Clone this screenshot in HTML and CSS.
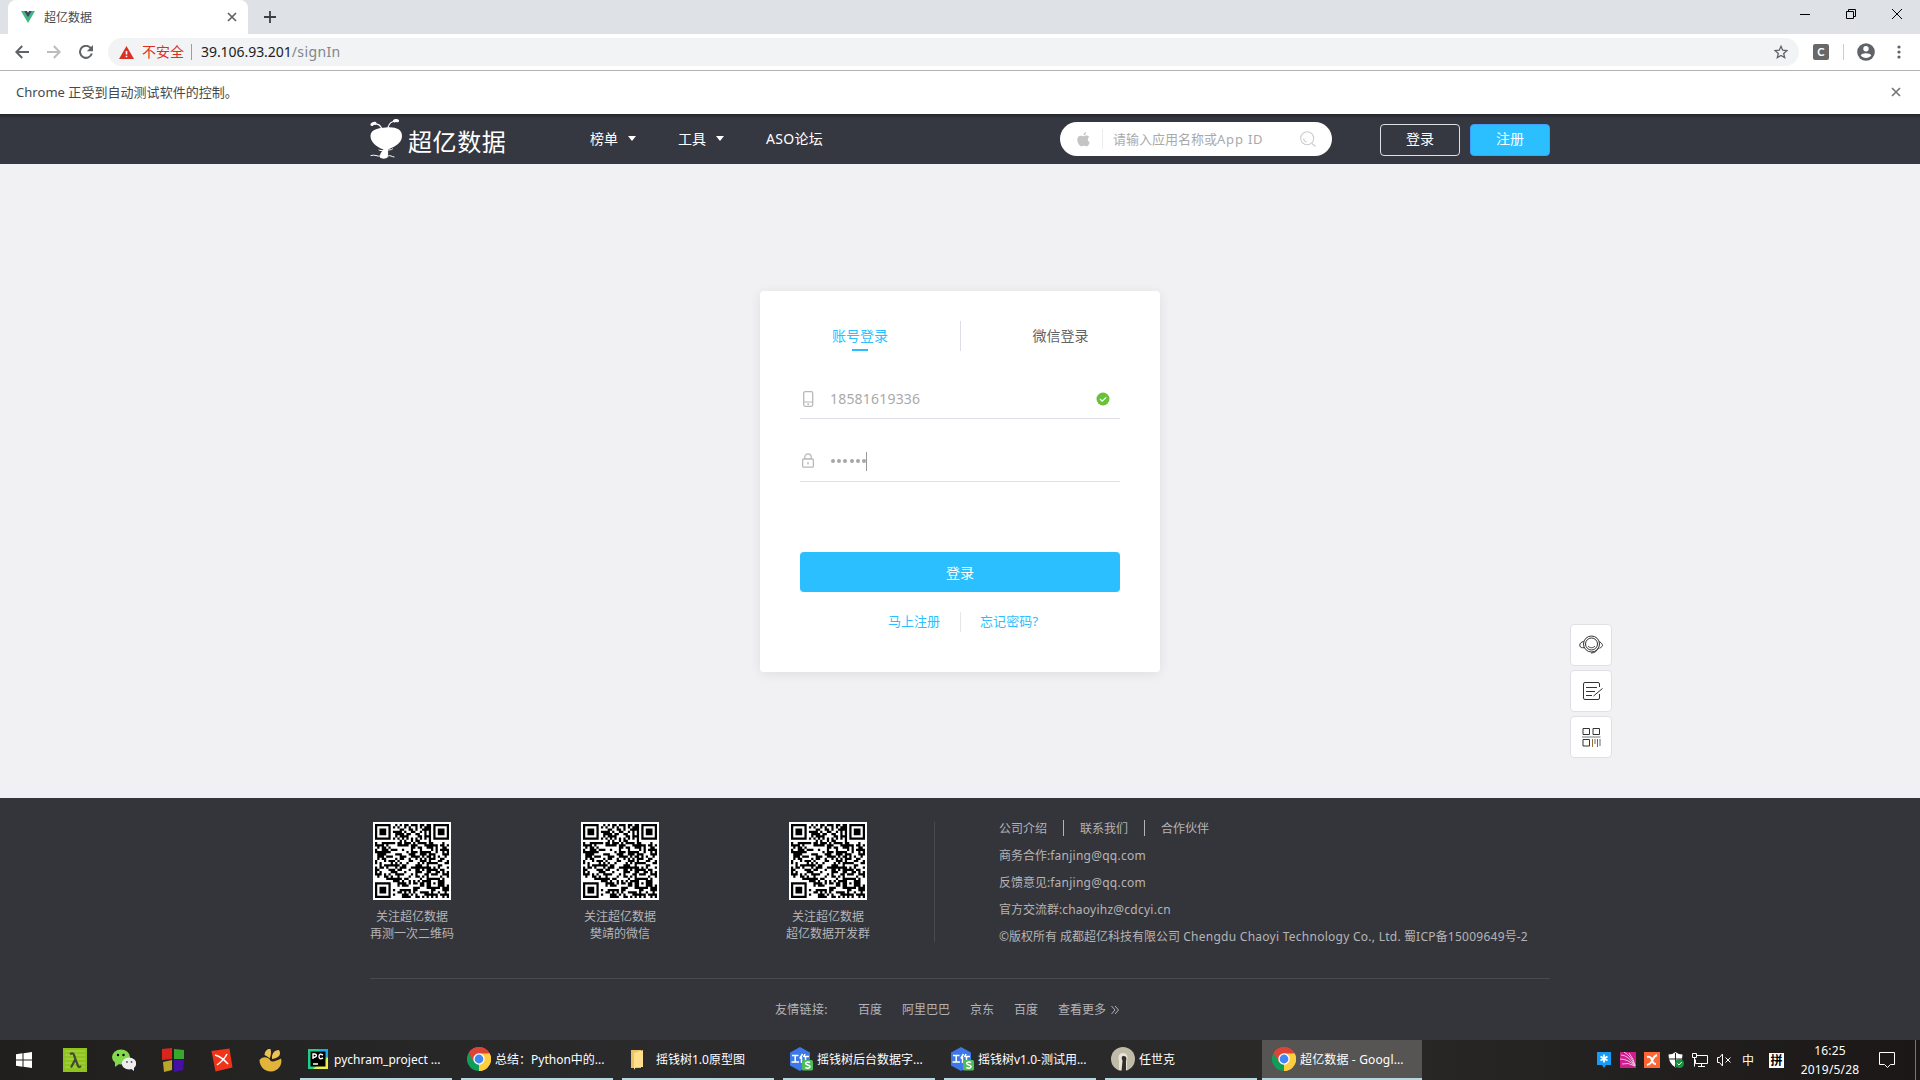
FILE: index.html
```html
<!DOCTYPE html>
<html lang="zh-CN">
<head>
<meta charset="utf-8">
<title>超亿数据</title>
<link rel="stylesheet" href="styles.css">
</head>
<body>
<svg class="defs" width="0" height="0">
  <symbol id="close" viewBox="0 0 10 10"><path d="M1 1l8 8M9 1L1 9" fill="none" stroke="currentColor" stroke-width="1.7"/></symbol>
  <symbol id="chrome" viewBox="0 0 24 24">
    <path d="M12 12L1.6 6A12 12 0 0 1 22.4 6z" fill="#db4437"/>
    <path d="M12 12L22.4 6A12 12 0 0 1 12 24z" fill="#ffcd40"/>
    <path d="M12 12V24A12 12 0 0 1 1.6 6z" fill="#0f9d58"/>
    <path d="M12 6.5H22.6L22.4 6A12 12 0 0 0 1.6 6L7 15z" fill="#db4437"/>
    <path d="M17 14.8L12 24A12 12 0 0 0 22.6 6.5H12z" fill="#ffcd40"/>
    <circle cx="12" cy="12" r="5.7" fill="#fff"/><circle cx="12" cy="12" r="4.4" fill="#4285f4"/>
  </symbol>
  <symbol id="wps" viewBox="0 0 24 24">
    <path d="M11 0l10 5.5v13L11 24 1 18.500v-13z" fill="#3c78e8"/>
    <path d="M3 8.500h6.500M6.200 8.500v6.500M2.500 15h7.500M13.500 7l-2.700 4.500M12.500 10v6M16 7l-1.500 3M15 9.500h5M16.500 9.500v5" stroke="#fff" stroke-width="1.5" fill="none"/>
    <rect x="13" y="13" width="11" height="10.500" rx="1.500" fill="#4fbb5b"/>
    <path d="M21 15.600c-1-.9-4.400-.9-4.400 1s4.500 1 4.500 3-3.600 1.900-4.700.8" stroke="#fff" stroke-width="1.500" fill="none"/>
  </symbol>
</svg>

<div class="tabstrip">
  <div class="tab">
    <svg class="favicon" viewBox="0 0 16 14"><path d="M1 1h3.500L8 7l3.500-6H15L8 13z" fill="#41b883"/><path d="M4.200 1H7l1 1.800L9 1h2.800L8 7.500z" fill="#35495e"/></svg>
    <span class="tab-title">超亿数据</span>
    <svg class="tab-close" viewBox="0 0 10 10"><use href="#close"/></svg>
  </div>
  <svg class="new-tab" viewBox="0 0 12 12"><path d="M6 0v12M0 6h12" stroke="#3c4043" stroke-width="1.800"/></svg>
  <div class="window-buttons">
    <svg width="10" height="10"><path d="M0 5.500h10" stroke="#000"/></svg>
    <svg width="10" height="10"><path d="M.5 2.500h7v7h-7zM2.500 2.500v-2h7v7h-2" fill="none" stroke="#000"/></svg>
    <svg width="10" height="10"><path d="M0 0l10 10M10 0L0 10" stroke="#000"/></svg>
  </div>
</div>

<div class="toolbar">
  <svg class="tool back" viewBox="0 0 14 14"><path d="M14 7H1.500M7.200 1L1.300 7l5.900 6" fill="none" stroke="#5f6368" stroke-width="2"/></svg>
  <svg class="tool forward" viewBox="0 0 14 14"><path d="M0 7h12.500M6.800 1l5.900 6-5.900 6" fill="none" stroke="#babcbe" stroke-width="2"/></svg>
  <svg class="tool reload" viewBox="0 0 14 14"><path d="M11.800 3.200A6 6 0 1 0 12.800 8.500" fill="none" stroke="#5f6368" stroke-width="2"/><path d="M14 0v6.200H7.800z" fill="#5f6368"/></svg>
  <div class="omnibox">
    <svg class="warning" viewBox="0 0 15 13"><path d="M7.500 0L15 13H0z" fill="#d93025"/><path d="M7.500 5v3.500M7.500 9.700v1.600" stroke="#fff" stroke-width="1.600"/></svg>
    <span class="unsafe">不安全</span>
    <span class="url">39.106.93.201<span class="path">/signIn</span></span>
    <svg class="star" viewBox="0 0 14 14"><path d="M7 1.300l1.700 3.900 4.200.4-3.200 2.800 1 4.200L7 10.400l-3.700 2.200 1-4.200L1.100 5.600l4.200-.4z" fill="none" stroke="#5f6368" stroke-width="1.300"/></svg>
  </div>
  <span class="extension">C</span>
  <span class="tool-sep"></span>
  <svg class="profile" viewBox="0 0 18 18"><circle cx="9" cy="9" r="8.800" fill="#5f6368"/><circle cx="9" cy="5.800" r="2.700" fill="#fff"/><path d="M3.700 12.200c1.300-2.700 9.300-2.700 10.600 0-2.500 3.700-8.100 3.700-10.600 0z" fill="#fff"/></svg>
  <svg class="kebab" viewBox="0 0 4 14"><circle cx="2" cy="2" r="1.600"/><circle cx="2" cy="7" r="1.600"/><circle cx="2" cy="12" r="1.600"/></svg>
</div>

<div class="infobar"><span>Chrome 正受到自动测试软件的控制。</span><svg viewBox="0 0 10 10"><use href="#close"/></svg></div>

<header class="site-header">
  <div class="container header-row">
    <div class="logo">
      <svg viewBox="0 0 32 40"><g fill="none" stroke="#fff" stroke-linecap="round"><path d="M11.500 9C10 5.500 7 4.500 3 5M18 8.500C19 4.500 22 2 26 2" stroke-width="1.100"/><path d="M2 5.500c.8-1 1.500-1.400 3-1.200M24.500 2c1-.7 2-.7 3-.2" stroke-width="3"/><path d="M1 36.500c4-1.500 6 1.500 10 .5M18 37c2-1.500 4 1 6 1M9 31c1.500.8 2.500.8 4 .3M18 31c1.500 0 3 0 4.500-1" stroke-width="1"/></g><path d="M16 8.500c9-1 16 1.500 16 8.500 0 6.500-6 10.500-14 13.500 0 2 .5 5-.5 8-1.500 1.500-6 1.500-7.500 0-.5-3 1-5.500 3.500-8C6 28 0 22 .5 16.500 1 10.500 8 9 16 8.500z" fill="#fff"/></svg>
      <span>超亿数据</span>
    </div>
    <nav>
      <a class="drop">榜单</a><a class="drop">工具</a><a>ASO论坛</a>
    </nav>
    <div class="search">
      <svg class="apple" viewBox="0 0 14 16"><path d="M9.800.3c.1 1.700-1.200 3.200-2.800 3.200C6.800 1.900 8.200.5 9.800.3zM7.200 4.500c.8 0 1.600-.7 3-.7 1.300 0 2.400.7 3 1.600-2.300 1.400-2 4.700.5 5.700-.7 2.200-2.100 4.300-3.500 4.300-1 0-1.400-.6-2.700-.6-1.300 0-1.800.6-2.700.6C2.700 15.400.3 11.600.3 8.400c0-3 1.900-4.500 3.800-4.500 1.300 0 2.300.6 3.100.6z" fill="#c4c4c4"/></svg>
      <span class="placeholder">请输入应用名称或<span class="app-id">App ID</span></span>
      <svg class="magnifier" viewBox="0 0 16 16"><circle cx="7.200" cy="7.200" r="6.500"/><path d="M12 12.500l3.500 3M3.500 7.500a4 4 0 0 0 3.500 3.500"/></svg>
    </div>
    <div class="auth"><button>登录</button><button class="primary">注册</button></div>
  </div>
</header>

<main>
  <section class="card">
    <div class="card-tabs"><div class="card-tab active"><span>账号登录</span></div><div class="card-tab"><span>微信登录</span></div></div>
    <div class="field">
      <svg viewBox="0 0 16 16"><g fill="none" stroke="#b8b8b8"><rect x="3.700" y=".7" width="9" height="14.600" rx="1.500" stroke-width="1.300"/><path d="M4 11h8.500"/></g><circle cx="8.200" cy="13.200" r=".9" fill="#b8b8b8"/></svg>
      <span class="value">18581619336</span>
      <svg class="check" viewBox="0 0 14 14"><circle cx="7" cy="7" r="6.500" fill="#67c23a"/><path d="M4 7l2.200 2.200 4-3.800" fill="none" stroke="#fff" stroke-width="1.300"/></svg>
    </div>
    <div class="field password">
      <svg viewBox="0 0 16 16"><g fill="none" stroke="#b8b8b8" stroke-width="1.300"><rect x="2.600" y="6" width="10.800" height="8.200" rx="1.200"/><path d="M4.800 6V4.100a3.200 3.200 0 0 1 6.400 0V6M8 8.800v2.800"/></g></svg>
      <span class="dots"><i></i><i></i><i></i><i></i><i></i><i></i></span><span class="caret"></span>
    </div>
    <button class="submit">登录</button>
    <div class="card-links"><a>马上注册</a><a>忘记密码?</a></div>
  </section>
</main>

<aside class="side-tools">
  <a><svg viewBox="0 0 24 24"><circle cx="12.500" cy="11" r="8"/><circle cx="12.500" cy="11" r="6"/><path d="M9 13c1.500 2.300 5.500 2.300 7 0M4.700 8.500C2 9 .8 10.500.8 12s.7 2.700 2.700 2.700h2M20.500 8.500c2.500 2 3 3 3 3.700s-1 2.300-3 3M19.500 15c-2 3.500-4 5-7.500 5"/></svg></a>
  <a><svg viewBox="0 0 24 24"><path d="M20.500 8V5q0-1.500-1.500-1.500H6Q4.500 3.500 4.500 5v14q0 1.500 1.500 1.500h13q1.500 0 1.500-1.500v-4M7 8.500h11M7 12.500h9M7 16.500h6M14.500 17l9-7.500"/></svg></a>
  <a><svg viewBox="0 0 24 24"><path d="M4 3.500h6.500v6H4zM14 3.500h6.500v6H14z"/><path d="M3 12h18.500" stroke="#777"/><path d="M4 14.500h6.500v6.500H4z"/><path d="M13.500 14v8" stroke="#9a6a3a"/><path d="M16 14v5M18.500 14v8M21 14v7" stroke="#667"/></svg></a>
</aside>

<footer>
  <div class="container footer-top">
    <div class="qr-item"><svg class="qr" viewBox="0 0 78 78"></svg><p>关注超亿数据<br>再测一次二维码</p></div>
    <div class="qr-item"><svg class="qr" viewBox="0 0 78 78"></svg><p>关注超亿数据<br>樊靖的微信</p></div>
    <div class="qr-item"><svg class="qr" viewBox="0 0 78 78"></svg><p>关注超亿数据<br>超亿数据开发群</p></div>
    <div class="company">
      <div class="about"><a>公司介绍</a><a>联系我们</a><a>合作伙伴</a></div>
      <p>商务合作:<span class="latin">fanjing@qq.com</span></p>
      <p>反馈意见:<span class="latin">fanjing@qq.com</span></p>
      <p>官方交流群:<span class="latin">chaoyihz@cdcyi.cn</span></p>
      <p class="copyright">©版权所有 成都超亿科技有限公司 <span class="latin">Chengdu Chaoyi Technology Co., Ltd.</span> 蜀<span class="latin">ICP</span>备<span class="latin">15009649</span>号-2</p>
    </div>
  </div>
  <div class="container friends"><span>友情链接:</span><a>百度</a><a>阿里巴巴</a><a>京东</a><a>百度</a><a>查看更多<svg width="8" height="10"><path d="M.5 1l3.500 4-3.500 4M4 1l3.500 4L4 9" fill="none" stroke="#b4b4b6"/></svg></a></div>
</footer>

<div class="taskbar">
  <div class="pins">
    <svg viewBox="0 0 24 24"><path d="M4 6.300l6.500-1v6.200H4zM11.500 5.200L20 4v7.500h-8.500zM4 12.500h6.500v6.200L4 17.700zM11.500 12.500H20V20l-8.500-1.200z" fill="#fff"/></svg>
    <svg viewBox="0 0 24 24"><path d="M0 0h24v24H0z" fill="#8fc31f"/><path d="M2 3h20M2 7h20M2 11h20M2 15h20M2 19h20" stroke="#aed94a"/><path d="M7 6c4-2 4 1 5 4l3 8q1 2 3 0M12.500 11L8 19.500" fill="none" stroke="#404a33" stroke-width="2.200"/></svg>
    <svg viewBox="0 0 24 24"><ellipse cx="9" cy="9" rx="9" ry="7.500" fill="#83d94d"/><path d="M3 14l0 5 4-3z" fill="#83d94d"/><circle cx="6" cy="7" r="1.200"/><circle cx="11.500" cy="7" r="1.200"/><ellipse cx="17" cy="15.500" rx="7.200" ry="6" fill="#eee"/><path d="M18 20l4 3v-4z" fill="#eee"/><circle cx="15" cy="14" r=".9" fill="#555"/><circle cx="19.500" cy="14" r=".9" fill="#555"/></svg>
    <svg viewBox="0 0 24 24"><path d="M1 1l10-1v11l-10 1z" fill="#d9251d"/><path d="M13 1l10 1v9l-10 0z" fill="#38a82d"/><path d="M2 14l9-2v10l-8 2z" fill="#b9a62a"/><path d="M13 12h10l-1 10-9 2z" fill="#4510a4"/></svg>
    <svg viewBox="0 0 24 24"><path d="M1.500 3l18-2.500 3 19-17 4z" fill="#f03419"/><path d="M5 7q7 2 13 9M17 6q-3 6-10 11" fill="none" stroke="#fff" stroke-width="1.500"/></svg>
    <svg viewBox="0 0 24 24"><path d="M.5 12C4 8 9 9 11 12c2 3 6 1 11-1.500 2 6-3 13-10 13S.5 18 .5 12z" fill="#e2b43b"/><path d="M5.500 7C6 2 9 .5 11.500 1c1 3 .5 7-1 9.500C9 8.500 7.500 8 5.500 7zM13 11c-.5-5 2-9 7-9 2.500 4 .5 8-7 9z" fill="#edc454"/></svg>
  </div>
  <div class="tasks">
    <div class="task"><svg viewBox="0 0 24 24"><path d="M2 2h20v20H2z" fill="#20cf8c"/><path d="M12 2h10v9z" fill="#1ba9ec"/><path d="M22 10v12H7z" fill="#e9ec49"/><path d="M4.500 4.500h15v15h-15z"/><path d="M7 12V7h2q3 1.500 0 3.200H7M17 8q-4-2-4 1.500t4 1.500M7 17h5" fill="none" stroke="#fff" stroke-width="1.400"/></svg><span>pychram_project ...</span></div>
    <div class="task"><svg><use href="#chrome"/></svg><span>总结：Python中的...</span></div>
    <div class="task"><svg viewBox="0 0 24 24"><path d="M3 3h10v18H3z" fill="#eac364"/><path d="M6 6l9-3v17H8l-2 3z" fill="#ffdf8c"/></svg><span>摇钱树1.0原型图</span></div>
    <div class="task"><svg><use href="#wps"/></svg><span>摇钱树后台数据字...</span></div>
    <div class="task"><svg><use href="#wps"/></svg><span>摇钱树v1.0-测试用...</span></div>
    <div class="task"><svg viewBox="0 0 24 24"><circle cx="12" cy="12" r="12" fill="#c0baa9"/><path d="M8 23v-9q-2-8 4-8t4 8v9" fill="#e9e4d8"/><path d="M10.500 24l1-10q-2-5 1-5 4 0 2.500 5v10z" fill="#332e29"/></svg><span>任世克</span></div>
    <div class="task current"><svg><use href="#chrome"/></svg><span>超亿数据 - Googl...</span></div>
  </div>
  <div class="tray">
    <svg viewBox="0 0 16 16"><path d="M1 0h14v13h-5l-2 3-2-3H1z" fill="#169bf6"/><path d="M8 2.500v8M4.500 4.500l7 4M11.500 4.500l-7 4" stroke="#fff" stroke-width="1.800"/></svg>
    <svg viewBox="0 0 16 16"><path d="M0 0h16v16H0z" fill="#cf1e8c"/><path d="M1 3q7 0 14 11M4 0q7 4 11 13M0 7q8 0 15 7M2 12q6-2 13 2M9 1q5 6 6 13" stroke="#eec3df" fill="none"/></svg>
    <svg viewBox="0 0 16 16"><path d="M0 0h16v16H0z" fill="#ff6634"/><path d="M3 5q4-1 5 3t4 4M13 3q-3 1-4.500 5T3 13" fill="none" stroke="#fff" stroke-width="2"/></svg>
    <svg viewBox="0 0 16 16"><path d="M7.500 0q3 2.500 7 2.500 0 9-7 13-7-4-7-13 4 0 7-2.500z" fill="#fff"/><path d="M7.500 1v14M1 7h13" stroke="#222"/><circle cx="11.500" cy="11.500" r="4.500" fill="#19943e"/><path d="M9.500 11.500l1.500 1.500 2.700-3" fill="none" stroke="#fff"/></svg>
    <svg viewBox="0 0 16 16"><path d="M4.500 3.500h11v8h-12v-4M9.500 12v3M6 14.500h7M.5 1.500h4v4h-4zM2.500 5.500v9" fill="none" stroke="#fff"/></svg>
    <svg viewBox="0 0 16 16"><path d="M1.500 5.500h2l3-3.500v12l-3-3.500h-2zM9.500 5.500l5 5M14.500 5.500l-5 5" fill="none" stroke="#fff"/></svg>
    <b class="lang">中</b>
    <b class="ime">拼</b>
    <div class="clock">16:25<br>2019/5/28</div>
    <svg class="notice" viewBox="0 0 16 16"><path d="M.5.5h15v12h-4l-3 3-3-3h-5z" fill="none" stroke="#fff"/></svg>
  </div>
</div>
<script src="qr.js"></script>
</body>
</html>
```
FILE: qr.js
```js
// Draws a 33-module code: finder squares, timing lines, alignment square and data cells.
const SIZE = 33, CELL = 74 / SIZE;

function ring(x, y, cx, cy) {
  return Math.max(Math.abs(x - cx), Math.abs(y - cy));
}

function buildPath() {
  let seed = 20190528, d = '';
  for (let y = 0; y < SIZE; y++) {
    for (let x = 0; x < SIZE; x++) {
      seed = (seed * 1103515245 + 12345) % 2147483648;
      let dark = (seed >> 12) % 100 < 51;
      if (x === 6 || y === 6) dark = (x + y) % 2 === 0;
      if (ring(x, y, 26, 26) <= 2) dark = ring(x, y, 26, 26) !== 1;
      for (const [cx, cy] of [[3, 3], [29, 3], [3, 29]]) {
        const r = ring(x, y, cx, cy);
        if (r <= 4) dark = r !== 2 && r !== 4;
      }
      if (dark) {
        d += `M${(2 + x * CELL).toFixed(2)} ${(2 + y * CELL).toFixed(2)}h${CELL.toFixed(2)}v${CELL.toFixed(2)}h-${CELL.toFixed(2)}z`;
      }
    }
  }
  return d;
}

const code = buildPath();
document.querySelectorAll('.qr').forEach(svg => {
  svg.innerHTML = `<path d="${code}"/>`;
});
```
FILE: styles.css
```css
* { box-sizing: border-box; }
body { margin: 0; width: 1920px; height: 1080px; overflow: hidden; background: #f1f1f3; font: 14px "Noto Sans", "Noto Sans CJK SC", sans-serif; color: #333; display: flex; flex-direction: column; }
p { margin: 0; }
svg { display: block; flex: none; }
span, a { white-space: nowrap; }
.defs { position: absolute; }
button { font: inherit; padding: 0; }

.tabstrip { height: 34px; flex: none; background: #dee1e6; display: flex; align-items: center; padding-left: 8px; }
.tab { width: 240px; height: 34px; background: #fff; border-radius: 8px 8px 0 0; display: flex; align-items: center; padding: 0 11px 0 12px; }
.favicon { width: 16px; height: 14px; }
.tab-title { font-size: 12px; margin-left: 8px; color: #45494d; flex: 1; }
.tab-close { width: 10px; height: 10px; color: #5f6368; }
.new-tab { width: 12px; height: 12px; margin-left: 16px; }
.window-buttons { margin-left: auto; display: flex; gap: 36px; padding-right: 18px; margin-top: -6px; }

.toolbar { height: 37px; flex: none; background: #fff; border-bottom: 1px solid #b3b3b3; display: flex; align-items: center; padding-left: 15px; }
.tool { width: 14px; height: 14px; }
.forward, .reload { margin-left: 18px; }
.omnibox { margin-left: 15px; width: 1691px; height: 28px; background: #f1f3f4; border-radius: 14px; display: flex; align-items: center; padding: 0 11px; }
.warning { width: 15px; height: 13px; }
.unsafe { color: #d93025; margin-left: 8px; padding-right: 7px; border-right: 1px solid #9b9fa3; line-height: 16px; }
.url { margin-left: 9px; flex: 1; color: #202124; letter-spacing: -.05px; padding-bottom: 2px; }
.path { color: #80868b; letter-spacing: .4px; }
.star { width: 14px; height: 14px; }
.extension { width: 16px; height: 16px; margin-left: 14px; border-radius: 2px; background: #686868; color: #fff; font: 700 11px/16px Lato, sans-serif; text-align: center; }
.tool-sep { width: 1px; height: 16px; background: #ccc; margin-left: 14px; }
.profile { width: 18px; height: 18px; margin-left: 13px; }
.kebab { width: 4px; height: 14px; margin-left: 22px; fill: #5f6368; }

.infobar { height: 43px; flex: none; background: #fff; display: flex; align-items: center; justify-content: space-between; padding: 0 19px 2px 16px; font-size: 13px; color: #45494d; }
.infobar span { letter-spacing: .04px; }
.infobar svg { width: 10px; height: 10px; color: #777; }

.container { width: 1180px; margin: 0 auto; }
.site-header { height: 50px; flex: none; background: linear-gradient(#25262c, #363841 5px); }
.header-row { height: 50px; display: flex; align-items: center; color: #fff; }
.logo { width: 220px; display: flex; align-items: center; gap: 6px; }
.logo svg { width: 32px; height: 40px; }
.logo span { font-size: 24px; line-height: 30px; letter-spacing: .6px; margin-top: 5px; }
nav { width: 470px; display: flex; gap: 42px; padding-bottom: 2px; }
nav a { display: flex; align-items: center; }
nav a:last-child { letter-spacing: .3px; }
.drop::after { content: ""; border: 4px solid transparent; border-top: 5px solid #fff; border-bottom: 0; margin-left: 10px; }
.search { width: 272px; height: 34px; border-radius: 17px; background: #fff; display: flex; align-items: center; padding: 0 16px 0 17px; }
.apple { width: 13px; height: 15px; }
.placeholder { font-size: 13px; color: #aaa; border-left: 1px solid #ececec; margin-left: 12px; padding-left: 10px; line-height: 20px; flex: 1; }
.app-id { letter-spacing: .8px; }
.magnifier { width: 16px; height: 16px; fill: none; stroke: #ccc; stroke-width: 1.1; }
.auth { margin: 2px 0 0 auto; display: flex; gap: 10px; }
.auth button { width: 80px; height: 32px; border: 1px solid #dcdfe6; border-radius: 4px; background: transparent; color: #fff; line-height: 28px; padding-bottom: 2px; }
.auth .primary { background: #2bbfff; border-color: #409eff; }

main { height: 634px; flex: none; padding-top: 127px; }
.card { width: 400px; height: 381px; margin: 0 auto; background: #fff; border-radius: 4px; box-shadow: 0 2px 12px rgba(0,0,0,.08); padding: 30px 40px 0; }
.card-tabs { display: flex; height: 30px; margin: 0 -40px; }
.card-tab { width: 200px; text-align: center; line-height: 30px; color: #606266; }
.card-tab + .card-tab { border-left: 1px solid #dcdfe6; }
.card-tab.active { color: #2bbfff; display: flex; flex-direction: column; align-items: center; }
.active span { line-height: 28px; height: 28px; padding-top: 1px; }
.active::after { content: ""; width: 16px; height: 2px; background: #2bbfff; }
.field { height: 40px; margin-top: 28px; border-bottom: 1px solid #dcdfe6; display: flex; align-items: center; }
.field > svg:first-child { width: 16px; height: 16px; }
.value { margin-left: 14px; color: #aaa; font-size: 14px; letter-spacing: .2px; flex: 1; padding-bottom: 1px; }
.check { width: 14px; height: 14px; margin-right: 10px; }
.password { margin-top: 23px; padding-bottom: 1px; }
.dots { display: flex; gap: 2.2px; margin-left: 15px; }
.dots i { width: 4px; height: 4px; border-radius: 50%; background: #a6a6a6; }
.caret { width: 1px; height: 19px; background: #999; margin-left: 0; }
.submit { display: block; width: 320px; height: 40px; margin-top: 70px; border: 0; border-radius: 4px; background: #2bbfff; color: #fff; }
.card-links { display: grid; grid-template-columns: 160px 160px; margin-top: 20px; line-height: 20px; font-size: 13px; color: #2bbfff; }
.card-links a { height: 20px; line-height: 19px; }
.card-links a:first-child { text-align: right; padding-right: 20px; }
.card-links a:last-child { border-left: 1px solid #e6e6e6; padding-left: 19px; letter-spacing: .1px; }

.side-tools { position: fixed; left: 1570px; top: 624px; display: flex; flex-direction: column; gap: 4px; }
.side-tools a { width: 42px; height: 42px; border: 1px solid #dfe0e4; border-radius: 4px; background: #fff; display: flex; align-items: center; justify-content: center; }
.side-tools svg { width: 24px; height: 24px; fill: none; stroke: #333; stroke-width: 1; }

footer { height: 242px; flex: none; background: #34353b; color: #b4b4b6; font-size: 12px; }
.footer-top { height: 181px; padding-top: 24px; display: flex; border-bottom: 1px solid #494a4f; }
.qr-item { width: 84px; margin-right: 124px; display: flex; flex-direction: column; align-items: center; text-align: center; line-height: 17px; white-space: nowrap; }
.qr { width: 78px; height: 78px; background: #fff; }
.qr-item p { margin-top: 8px; }
.company { height: 120px; border-left: 1px solid #494a4f; margin-left: -60px; padding-left: 64px; line-height: 27px; }
.about { display: flex; line-height: 16px; margin: -2px 0 6px; }
.about a { height: 16px; padding-top: 1px; }
.about a + a { border-left: 1px solid #b4b4b6; margin-left: 16px; padding-left: 16px; }
.latin { letter-spacing: .24px; }
.copyright { white-space: nowrap; }
.copyright .latin { letter-spacing: .26px; }
.friends { display: flex; padding: 22px 0 0 405px; line-height: 18px; }
.friends span { width: 83px; letter-spacing: .3px; }
.friends a { display: flex; align-items: center; gap: 5px; margin-right: 20px; }

.taskbar { height: 40px; flex: none; background: linear-gradient(90deg, #201f1d, #2b2b2d 35%, #2a2928 70%, #1b1717); display: flex; color: #fff; font-size: 12px; }
.pins { width: 300px; display: flex; align-items: center; gap: 25px; padding-left: 12px; }
.pins svg { width: 24px; height: 24px; }
.pins svg:first-child { margin-right: 2px; }
.tasks { display: flex; gap: 9px; }
.task { width: 152px; border-bottom: 2px solid #b6d9df; display: flex; align-items: center; gap: 4px; padding-left: 6px; }
.task svg { width: 24px; height: 24px; }
.current { width: 160px; margin-left: -4px; padding-left: 10px; background: #565553; }
.current span { letter-spacing: .15px; }
.tray { margin-left: auto; width: 324px; display: flex; align-items: center; }
.tray > svg { width: 16px; height: 16px; margin-right: 8px; flex: none; }
.lang { width: 12px; font-weight: 400; margin-left: 2px; }
.ime { width: 15px; height: 15px; margin-left: 15px; background: #fff; color: #000; line-height: 15px; text-align: center; }
.clock { width: 72px; margin-left: 10px; text-align: center; line-height: 19px; letter-spacing: .15px; }
.tray .notice { margin: 0 0 0 13px; }
.tray::after { content: ""; width: 1px; height: 40px; background: #777; margin: 0 4px 0 auto; }
```
